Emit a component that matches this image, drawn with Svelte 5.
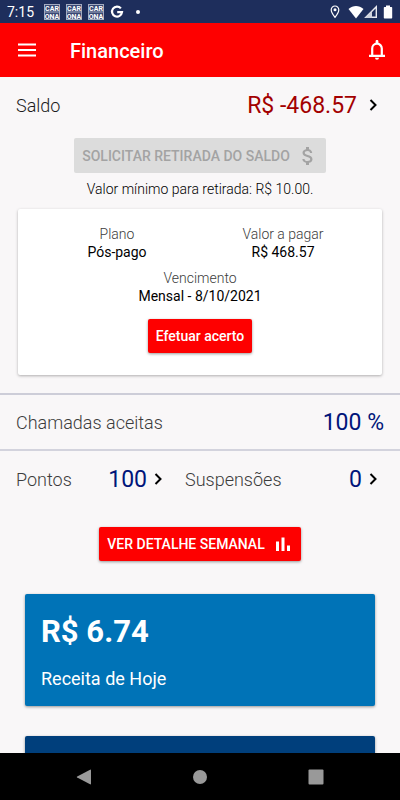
<script>
  const apps = [1, 2, 3];

  const plan = [
    { label: 'Plano', value: 'Pós-pago' },
    { label: 'Valor a pagar', value: 'R$ 468.57' },
    { label: 'Vencimento', value: 'Mensal - 8/10/2021' },
  ];

  const counters = [
    { label: 'Pontos', value: '100' },
    { label: 'Suspensões', value: '0' },
  ];
</script>

{#snippet chevron()}
  <svg class="chevron" viewBox="0 0 8 12" aria-hidden="true">
    <path d="M1.5 1l5 5-5 5" fill="none" stroke="currentColor" stroke-width="2" />
  </svg>
{/snippet}

<div class="screen">
  <div class="status-bar">
    <span class="clock">7:15</span>
    {#each apps as app (app)}
      <svg class="app-icon" viewBox="0 0 16 16">
        <rect x="0.5" y="0.5" width="15" height="15" fill="#3a4874" stroke="#a3abc0" />
        <path d="M0 8h16" stroke="#a3abc0" />
        <text x="8" y="7" text-anchor="middle">CAR</text>
        <text x="8" y="14.5" text-anchor="middle">ONA</text>
      </svg>
    {/each}
    <svg class="google" viewBox="0 0 14 14">
      <path d="M10.9 3.4A5 5 0 1 0 12 7.2H7.2" fill="none" stroke="#fff" stroke-width="2.2" />
    </svg>
    <span class="dot"></span>
    <div class="signals">
      <svg width="10" height="14" viewBox="0 0 10 14">
        <path d="M5 1a3.8 3.8 0 0 0-3.8 3.8C1.2 7.7 5 12.3 5 12.3s3.8-4.6 3.8-7.5A3.8 3.8 0 0 0 5 1z" fill="none" stroke="#fff" stroke-width="1.2" />
        <circle cx="5" cy="4.8" r="1.5" fill="#fff" />
      </svg>
      <svg class="wifi" width="16" height="14" viewBox="0 0 16 14">
        <path d="M0.5 4C5 0 11 0 15.5 4L8 13.5z" fill="#fff" />
      </svg>
      <svg width="14" height="14" viewBox="0 0 14 14">
        <path d="M12.3 1.7v10.6H1.8z" fill="none" stroke="#e8eaf0" stroke-width="1.4" />
        <path d="M1 13L8 6v7z" fill="#cfd3de" />
      </svg>
      <svg class="battery" width="10" height="14" viewBox="0 0 10 14">
        <path d="M3 0.5h4V2h1.5q.7 0 .7.7v10q0 .8-.7.8h-7q-.7 0-.7-.8v-10Q.8 2 1.5 2H3z" fill="#fff" />
      </svg>
    </div>
  </div>

  <header class="app-bar">
    <button aria-label="Menu">
      <svg width="20" height="14" viewBox="0 0 20 14">
        <path d="M1 1.5h18M1 7h18M1 12.5h18" stroke="#fff" stroke-width="2" />
      </svg>
    </button>
    <h1>Financeiro</h1>
    <button aria-label="Notificações">
      <svg width="16" height="20" viewBox="0 0 16 20">
        <path d="M3.2 16V8.5a4.8 4.8 0 0 1 9.6 0V16" fill="none" stroke="#fff" stroke-width="2.2" />
        <path d="M0 14.8h16v2.2H0zM6.6 1.3a1.4 1.4 0 0 1 2.8 0V3.5H6.6zM6 17.8h4a2 2 0 0 1-4 0z" fill="#fff" />
      </svg>
    </button>
  </header>

  <main>
    <a class="row" href="#saldo">
      <span class="label dark">Saldo</span>
      <span class="amount negative">R$ -468.57</span>
      {@render chevron()}
    </a>

    <div class="withdraw">
      <button class="button" disabled>
        SOLICITAR RETIRADA DO SALDO
        <svg width="20" height="24" viewBox="2 0 20 24">
          <path d="M11.8 10.9c-2.27-.59-3-1.2-3-2.15 0-1.09 1.01-1.85 2.7-1.85 1.78 0 2.44.85 2.5 2.1h2.21c-.07-1.72-1.12-3.3-3.21-3.81V3h-3v2.16c-1.94.42-3.5 1.68-3.5 3.61 0 2.31 1.91 3.46 4.7 4.13 2.5.6 3 1.48 3 2.41 0 .69-.49 1.79-2.7 1.79-2.06 0-2.87-.92-2.98-2.1h-2.2c.12 2.19 1.76 3.42 3.68 3.83V21h3v-2.15c1.95-.37 3.5-1.5 3.5-3.55 0-2.84-2.43-3.81-4.7-4.4z" fill="currentColor" />
        </svg>
      </button>
      <p>Valor mínimo para retirada: R$ 10.00.</p>
    </div>

    <section class="plan">
      <dl>
        {#each plan as item}
          <div>
            <dt>{item.label}</dt>
            <dd>{item.value}</dd>
          </div>
        {/each}
      </dl>
      <button class="button primary">Efetuar acerto</button>
    </section>

    <div class="row accepted">
      <span class="label">Chamadas aceitas</span>
      <span class="amount">100 %</span>
    </div>

    <div class="counters">
      {#each counters as counter}
        <a class="row" href="#{counter.label}">
          <span class="label">{counter.label}</span>
          <span class="amount">{counter.value}</span>
          {@render chevron()}
        </a>
      {/each}
    </div>

    <button class="button primary weekly">
      VER DETALHE SEMANAL
      <svg width="20" height="20" viewBox="0 0 20 20">
        <path d="M3 7.5h3V17H3zM8.5 3.5h3V17h-3zM14 11.5h3V17h-3z" fill="currentColor" />
      </svg>
    </button>

    <section class="revenue">
      <strong>R$ 6.74</strong>
      <span>Receita de Hoje</span>
    </section>
    <section class="revenue next"></section>
  </main>

  <nav>
    <button aria-label="Voltar">
      <svg width="16" height="16" viewBox="0 0 16 16"><path d="M15 1.2v13.6q0 .9-.9.5L1.2 8.6q-1-.6 0-1.2L14.1.7q.9-.4.9.5z" fill="#999" /></svg>
    </button>
    <button aria-label="Início">
      <svg width="16" height="16" viewBox="0 0 16 16"><circle cx="8" cy="8" r="7" fill="#999" /></svg>
    </button>
    <button aria-label="Recentes">
      <svg width="16" height="16" viewBox="0 0 16 16"><rect x="0.5" y="0.5" width="15" height="15" rx="1" fill="#999" /></svg>
    </button>
  </nav>
</div>

<style>
  :global(body) {
    background: #f9f7f8;
  }

  .screen {
    display: flex;
    flex-direction: column;
    height: 100vh;
    font-family: Roboto, sans-serif;
    color: #000;
  }

  button {
    font-family: inherit;
    border: 0;
    padding: 0;
    background: none;
    cursor: pointer;
  }

  svg {
    display: block;
    flex: none;
  }

  .status-bar {
    display: flex;
    align-items: center;
    gap: 6px;
    height: 23px;
    padding: 0 7px;
    background: #1e2e5c;
    color: #fff;
  }

  .clock {
    margin-right: 4px;
    font-size: 14px;
  }

  .app-icon {
    width: 16px;
    height: 16px;
  }

  .app-icon text {
    font-family: 'Liberation Sans Narrow', Roboto, sans-serif;
    font-size: 7px;
    font-weight: 700;
    fill: #fff;
  }

  .google {
    width: 14px;
    height: 14px;
  }

  .dot {
    width: 4px;
    height: 4px;
    margin-left: 6px;
    border-radius: 50%;
    background: #fff;
  }

  .signals {
    display: flex;
    align-items: center;
    margin-left: auto;
  }

  .wifi {
    margin-left: 8px;
  }

  .battery {
    margin-left: 5px;
  }

  .app-bar {
    display: flex;
    align-items: center;
    height: 54px;
    padding: 0 15px 0 17px;
    background: #fe0000;
    color: #fff;
  }

  h1 {
    flex: 1;
    margin: 2px 0 0 33px;
    font-size: 20px;
    font-weight: 500;
  }

  main {
    display: flex;
    flex: 1;
    flex-direction: column;
    min-height: 0;
    overflow: hidden;
    background: #f9f7f8;
  }

  main > * {
    flex: none;
  }

  .row {
    display: flex;
    align-items: center;
    height: 56px;
    padding: 0 16px;
    color: inherit;
    text-decoration: none;
  }

  .label {
    flex: 1;
    font-size: 18px;
    font-weight: 300;
    color: #3c3c3c;
  }

  .dark {
    color: #1c1c1c;
  }

  .amount {
    font-size: 23px;
    color: #00157a;
  }

  .negative {
    margin-right: 5px;
    color: #a30000;
  }

  .chevron {
    width: 8px;
    height: 12px;
    margin: 0 7px;
    color: #000;
  }

  .withdraw {
    display: flex;
    flex-direction: column;
    align-items: center;
    gap: 7px;
    padding-top: 5px;
  }

  .button {
    display: flex;
    align-items: center;
    gap: 8px;
    height: 34px;
    padding: 0 8px;
    border-radius: 2px;
    font-size: 14px;
    font-weight: 500;
  }

  .button:disabled {
    height: 35px;
    background: #dcdcdc;
    color: #a3a3a3;
    cursor: default;
  }

  .primary {
    background: #fe0000;
    color: #fff;
    box-shadow: 0 1px 3px rgba(0, 0, 0, 0.4);
  }

  .withdraw p {
    margin: 0;
    font-size: 14px;
    font-weight: 300;
    line-height: 18px;
    color: #000;
  }

  .plan {
    display: flex;
    flex-direction: column;
    align-items: center;
    margin: 11px 18px 18px;
    padding: 16px 0 22px;
    border-radius: 2px;
    background: #fff;
    box-shadow: 0 1px 3px rgba(0, 0, 0, 0.3);
  }

  dl {
    display: flex;
    flex-wrap: wrap;
    justify-content: center;
    width: 100%;
    row-gap: 8px;
    margin: 0 0 14px;
    padding: 0 16px;
    box-sizing: border-box;
    font-size: 14px;
    line-height: 18px;
    text-align: center;
  }

  dl div {
    flex: 0 0 50%;
  }

  dt {
    font-weight: 300;
    color: #3c3c3c;
  }

  dd {
    margin: 0;
  }

  .accepted {
    height: 54px;
    border-top: 2px solid #cdcdd8;
    border-bottom: 2px solid #d3d3dd;
  }

  .counters {
    display: flex;
    gap: 16px;
  }

  .counters .row {
    flex: 1;
    padding: 0 0 0 16px;
  }

  .counters .row + .row {
    flex: 0 0 215px;
    padding: 0 16px 0 0;
    box-sizing: border-box;
  }

  .weekly {
    align-self: center;
    margin: 20px 0 33px;
  }

  .revenue {
    display: flex;
    flex-direction: column;
    gap: 16px;
    min-height: 112px;
    margin: 0 25px 30px;
    padding: 18px 16px 16px;
    box-sizing: border-box;
    border-radius: 2px;
    background: #0073b7;
    color: #fff;
    font-size: 18px;
    line-height: 22px;
    box-shadow: 0 1px 3px rgba(0, 0, 0, 0.4);
  }

  .revenue strong {
    font-size: 31px;
    line-height: 40px;
  }

  .next {
    background: #003f7c;
  }

  nav {
    display: flex;
    justify-content: space-around;
    align-items: center;
    height: 47px;
    padding: 0 26px;
    background: #000;
  }
</style>
